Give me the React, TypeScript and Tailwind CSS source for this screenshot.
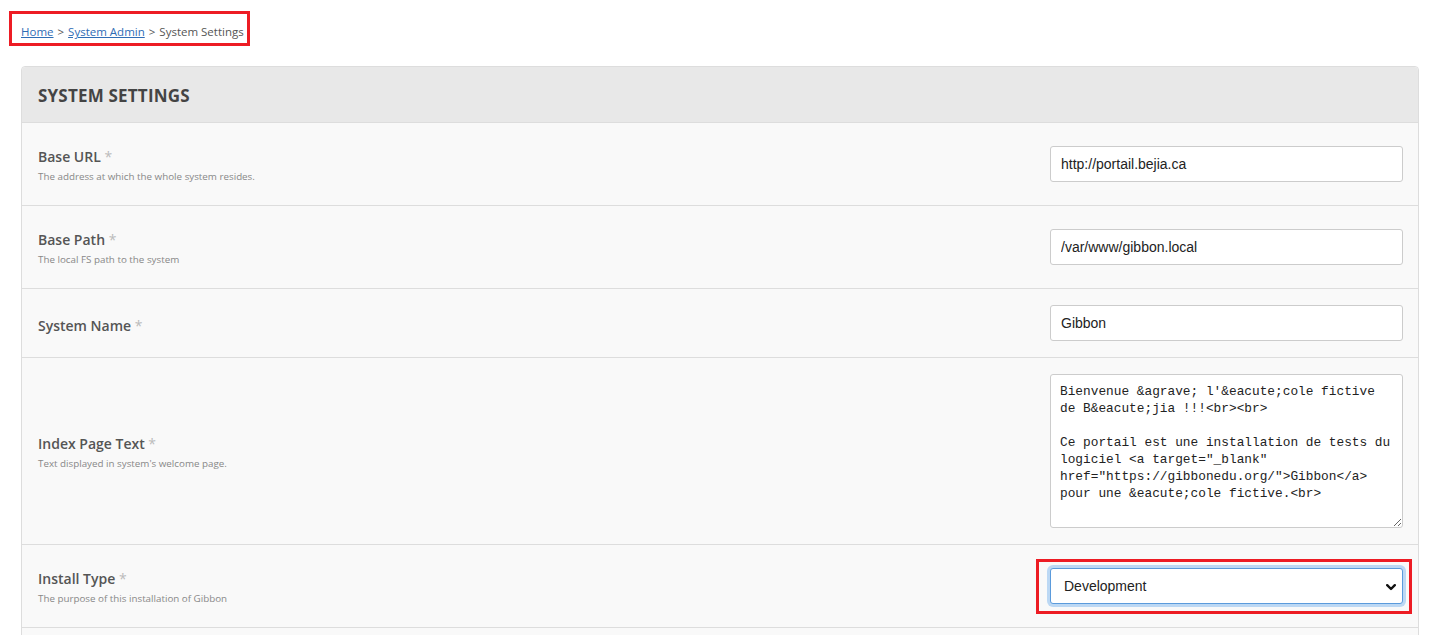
import React from 'react';

const FONT = { fontFamily: '"Open Sans", "Noto Sans", sans-serif' };

const INDEX_TEXT =
  'Bienvenue &agrave; l\'&eacute;cole fictive\nde B&eacute;jia !!!<br><br>\n\nCe portail est une installation de tests du\nlogiciel <a target="_blank"\nhref="https://gibbonedu.org/">Gibbon</a>\npour une &eacute;cole fictive.<br>';

function Label({ title, desc }: { title: string; desc?: string }) {
  return (
    <div className="pt-2 pb-[2px]">
      <div className="text-[14px] leading-5 font-semibold text-[#555]">
        {title} <span className="font-normal text-[#bbb]">*</span>
      </div>
      {desc ? <div className="text-[9.8px] leading-[20px] text-[#888]">{desc}</div> : null}
    </div>
  );
}

function Row({ children }: { children: React.ReactNode }) {
  return (
    <div className="flex items-center justify-between border-b border-[#ddd] py-4 pr-[15px] pl-4">
      {children}
    </div>
  );
}

function TextInput({ value }: { value: string }) {
  return (
    <input
      type="text"
      readOnly
      value={value}
      className="h-9 w-[353px] rounded-[3px] border border-[#ccc] bg-white px-[10px] text-[14px] text-[#222] outline-none"
      style={{ fontFamily: '"Liberation Sans", Arial, sans-serif' }}
    />
  );
}

export default function App() {
  return (
    <div className="min-h-screen bg-white pt-[11px] pr-[10px] pl-[21px]" style={FONT}>
      <div className="-ml-[12px] inline-flex h-[35px] items-center border-[3px] border-[#ed1c24] pt-[7px] pr-[3px] pl-[9px] text-[11.5px] text-[#555]">
        <a href="#" className="text-[#2f6db5] underline">Home</a>
        <span className="mx-[4px]">&gt;</span>
        <a href="#" className="text-[#2f6db5] underline">System Admin</a>
        <span className="mx-[4px]">&gt;</span>
        <span>System Settings</span>
      </div>

      <div className="mt-[20px] rounded-[4px] border border-[#ddd] bg-[#f9f9f9]">
        <div className="flex h-[56px] items-center rounded-t-[4px] border-b border-[#ddd] bg-[#e8e8e8] px-4 pt-[3px]">
          <h1 className="text-[17px] font-bold tracking-[0.2px] text-[#444]">SYSTEM SETTINGS</h1>
        </div>

        <Row>
          <Label title="Base URL" desc="The address at which the whole system resides." />
          <TextInput value="http://portail.bejia.ca" />
        </Row>
        <Row>
          <Label title="Base Path" desc="The local FS path to the system" />
          <TextInput value="/var/www/gibbon.local" />
        </Row>
        <Row>
          <Label title="System Name" />
          <TextInput value="Gibbon" />
        </Row>
        <Row>
          <Label title="Index Page Text" desc="Text displayed in system's welcome page." />
          <textarea
            readOnly
            defaultValue={INDEX_TEXT}
            className="h-[154px] w-[353px] rounded-[3px] border border-[#ccc] bg-white px-[9px] pt-[8px] text-[12.8px] leading-[17px] text-[#222] outline-none"
            style={{ fontFamily: '"Liberation Mono", "DejaVu Sans Mono", monospace' }}
          />
        </Row>
        <Row>
          <Label title="Install Type" desc="The purpose of this installation of Gibbon" />
          <div className="relative">
            <div className="pointer-events-none absolute -top-[9px] -right-[9px] -bottom-[10px] -left-[14px] border-[3px] border-[#ed1c24]" />
            <div
              className="relative flex h-9 w-[353px] items-center rounded-[3px] border border-[#5b9bdc] bg-white pl-[13px] text-[14px] text-[#222] shadow-[0_0_0_3px_#bcd8f4]"
              style={{ fontFamily: '"Liberation Sans", Arial, sans-serif' }}
            >
              Development
              <svg className="absolute top-[15px] right-[6px]" width="10" height="7" viewBox="0 0 10 7">
                <path d="M1.2 1.2 L5 5 L8.8 1.2" fill="none" stroke="#111" strokeWidth="2.4" strokeLinecap="round" strokeLinejoin="round" />
              </svg>
            </div>
          </div>
        </Row>
        <div className="h-[40px]" />
      </div>
    </div>
  );
}
